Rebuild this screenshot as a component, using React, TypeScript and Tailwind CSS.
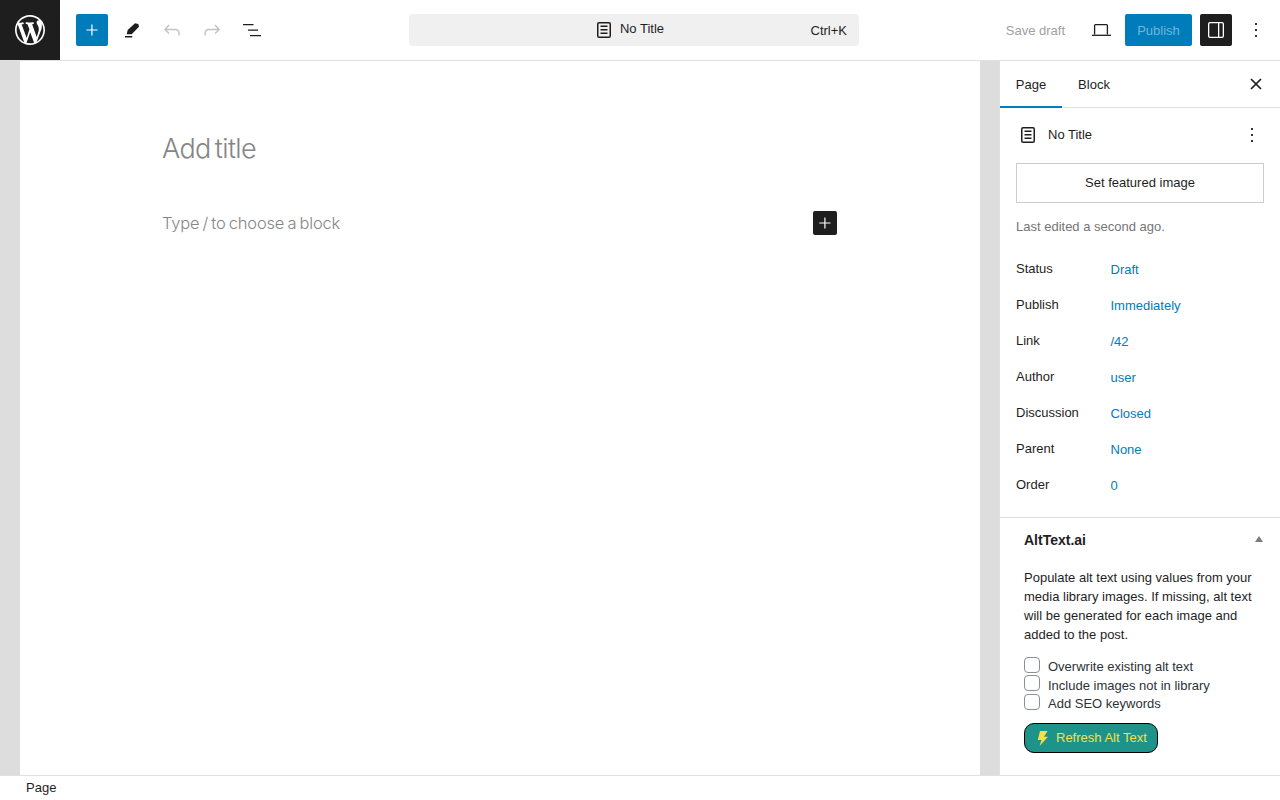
import React from "react";

const P = ({ d, size = 24, className = "" }: { d: string; size?: number; className?: string }) => (
  <svg viewBox="0 0 24 24" width={size} height={size} className={`fill-current shrink-0 ${className}`}>
    <path d={d} />
  </svg>
);

const icons = {
  plus: "M17.5 11.4h-5V6.4h-1.2v5H6.3v1.2h5v5h1.2v-5h5z",
  edit: "M15 5.3l3.3.7.7 2.7-7.3 7.6H6.7l1-4.3zM5 18h7.3v1.4H5z",
  undo: "M18.3 11.7c-.6-.6-1.4-.9-2.3-.9H6.7l2.9-3.3-1.1-1-4.5 5L8.5 16l1-1-2.7-2.7H16c.5 0 .9.2 1.3.5 1 1 1 3.4 1 4.5v.3h1.5v-.2c0-1.5 0-4.3-1.5-5.7z",
  redo: "M15.6 6.5l-1.1 1 2.9 3.3H8c-.9 0-1.7.3-2.3.9-1.4 1.5-1.4 4.2-1.4 5.6v.2h1.5v-.3c0-1.1 0-3.5 1-4.5.3-.3.7-.5 1.3-.5h9.2L14.5 15l1.1 1.1 4.6-4.6-4.6-5z",
  list: "M3 6h10.5v1.3H3zM8 11.4h10v1.3H8zM10 17h11v1.3H10z",
  page: "M15.5 7.5h-7V9h7V7.5Zm-7 3.5h7v1.5h-7V11Zm7 3.5h-7V16h7v-1.5ZM17 4H7a2 2 0 0 0-2 2v12a2 2 0 0 0 2 2h10a2 2 0 0 0 2-2V6a2 2 0 0 0-2-2ZM7 5.5h10a.5.5 0 0 1 .5.5v12a.5.5 0 0 1-.5.5H7a.5.5 0 0 1-.5-.5V6a.5.5 0 0 1 .5-.5Z",
  drawer: "M18 4H6c-1.1 0-2 .9-2 2v12c0 1.1.9 2 2 2h12c1.1 0 2-.9 2-2V6c0-1.1-.9-2-2-2zm-4 14.8H6c-.4 0-.7-.3-.7-.7V5.9c0-.4.3-.7.7-.7h8v13.6zm4.7-.7c0 .4-.3.7-.7.7h-2.7V5.2H18c.4 0 .7.3.7.7v12.2z",
  more: "M12.9 18.9h-1.8v-1.8h1.8zm0-6h-1.8v-1.8h1.8zm0-6h-1.8V5.1h1.8z",
};

const rows = [
  ["Status", "Draft"],
  ["Publish", "Immediately"],
  ["Link", "/42"],
  ["Author", "user"],
  ["Discussion", "Closed"],
  ["Parent", "None"],
  ["Order", "0"],
];

const checks = [
  ["Overwrite existing alt text", "h-[18px]", "mt-[2px]"],
  ["Include images not in library", "h-[19px]", "mt-[3px]"],
  ["Add SEO keywords", "h-[18px]", "mt-[2px]"],
];

export default function App() {
  return (
    <div className="w-[1280px] h-[800px] overflow-hidden flex flex-col bg-white text-[13px] text-[#1e1e1e] font-['Liberation_Sans',Arial,sans-serif]">
      <header className="h-[61px] shrink-0 border-b border-[#e0e0e0] grid grid-cols-[409px_450px_421px]">
        <div className="flex items-center">
          <div className="w-[60px] h-[60px] bg-[#1e1e1e] flex items-center justify-center text-white">
            <svg viewBox="-2 -2 24 24" width={36} height={36} className="fill-current">
              <path d="M20 10c0-5.51-4.49-10-10-10C4.48 0 0 4.49 0 10c0 5.52 4.48 10 10 10 5.51 0 10-4.48 10-10zM7.78 15.37L4.37 6.22c.55-.02 1.17-.08 1.17-.08.5-.06.44-1.13-.06-1.11 0 0-1.45.11-2.37.11-.18 0-.37 0-.58-.01C4.12 2.69 6.87 1.11 10 1.11c2.33 0 4.45.87 6.05 2.34-.68-.11-1.65.39-1.65 1.58 0 .74.45 1.36.9 2.1.35.61.55 1.36.55 2.46 0 1.49-1.4 5-1.4 5l-3.03-8.37c.54-.02.82-.17.82-.17.5-.05.44-1.25-.06-1.22 0 0-1.44.12-2.38.12-.87 0-2.33-.12-2.33-.12-.5-.03-.56 1.2-.06 1.22l.92.08 1.26 3.41zM17.41 10c.24-.64.74-1.87.43-4.25.7 1.29 1.05 2.71 1.05 4.25 0 3.29-1.73 6.24-4.4 7.78.97-2.59 1.94-5.2 2.92-7.78zM6.1 18.09C3.12 16.65 1.11 13.53 1.11 10c0-1.3.23-2.48.72-3.59C3.25 10.3 4.67 14.2 6.1 18.09zm4.03-6.63l2.58 6.98c-.86.29-1.76.45-2.71.45-.79 0-1.57-.11-2.29-.33.81-2.38 1.62-4.74 2.42-7.1z" />
            </svg>
          </div>
          <div className="flex items-center gap-2 pl-4">
            <div className="w-8 h-8 rounded-[2px] bg-[#007cba] text-white flex items-center justify-center"><P d={icons.plus} /></div>
            <div className="w-8 h-8 flex items-center justify-center"><P d={icons.edit} /></div>
            <div className="w-8 h-8 flex items-center justify-center text-[#c4c4c4]"><P d={icons.undo} /></div>
            <div className="w-8 h-8 flex items-center justify-center text-[#c4c4c4]"><P d={icons.redo} /></div>
            <div className="w-8 h-8 flex items-center justify-center"><P d={icons.list} /></div>
          </div>
        </div>
        <div className="self-center h-8 rounded-[4px] bg-[#f0f0f0] grid grid-cols-[1fr_auto_1fr] items-center pr-3">
          <span />
          <div className="flex items-center gap-1 pb-[1px]">
            <P d={icons.page} size={24} className="mt-[1px]" />
            <span className="mb-[2px]">No Title</span>
          </div>
          <span className="justify-self-end pt-[1px]">Ctrl+K</span>
        </div>
        <div className="flex items-center justify-end pr-3">
          <span className="text-[#a0a0a0] mr-[24px] pt-[1px]">Save draft</span>
          <svg viewBox="0 0 24 24" width={24} height={24} className="mr-3 shrink-0 fill-none stroke-current" strokeWidth={1.3}>
            <path d="M5.6 16.5V7.5c0-.5.4-.9.9-.9h11c.5 0 .9.4.9.9v9" />
            <path d="M3 17.3h19" />
          </svg>
          <div className="w-[67px] h-8 rounded-[2px] bg-[#007cba] text-[#72b6d9] flex items-center justify-center pt-[1px]">Publish</div>
          <div className="w-8 h-8 ml-2 rounded-[2px] bg-[#1e1e1e] text-white flex items-center justify-center"><P d={icons.drawer} /></div>
          <div className="w-6 h-8 ml-3 flex items-center justify-center"><P d={icons.more} /></div>
        </div>
      </header>

      <main className="flex-1 min-h-0 flex">
        <div className="flex-1 bg-[#dddddd] pl-5 pr-[19px] flex">
          <div className="flex-1 bg-white flex flex-col items-center font-['Inter',sans-serif]">
            <div className="w-[674px]">
              <div className="mt-[69px] h-[38px] flex items-center -ml-px text-[27px] font-light tracking-[-0.6px] [word-spacing:-3px] text-[#858585]">Add title</div>
              <div className="mt-[43px] h-[24px] flex items-center justify-between text-[#858585]">
                <span className="-ml-px text-[16.5px] font-light tracking-[-0.2px] [word-spacing:-1.2px]">Type / to choose a block</span>
                <div className="w-6 h-6 rounded-[2px] bg-[#1e1e1e] text-white flex items-center justify-center"><P d={icons.plus} /></div>
              </div>
            </div>
          </div>
        </div>
        <aside className="w-[281px] shrink-0 border-l border-[#e0e0e0] bg-white flex flex-col">
          <div className="h-[47px] shrink-0 border-b border-[#e0e0e0] flex items-stretch relative">
            <div className="w-[62px] flex items-center justify-center border-b-2 border-[#007cba] -mb-px pt-[3px]">Page</div>
            <div className="w-[64px] flex items-center justify-center pt-[2px]">Block</div>
            <div className="ml-auto mr-3 w-6 flex items-center justify-center">
              <svg viewBox="0 0 24 24" width={24} height={24} className="fill-none stroke-current" strokeWidth={1.7}>
                <path d="M7 7l10 10M17 7L7 17" />
              </svg>
            </div>
          </div>
          <div className="px-4 pt-[15px] border-b border-[#e0e0e0] h-[410px] shrink-0">
            <div className="h-6 flex items-center">
              <P d={icons.page} className="mr-2" />
              <span>No Title</span>
              <P d={icons.more} className="ml-auto" />
            </div>
            <div className="mt-[16px] h-10 border border-[#cccccc] flex items-center justify-center">Set featured image</div>
            <div className="mt-[16px] text-[#757575] leading-[16px]">Last edited a second ago.</div>
            <div className="mt-[17px]">
              {rows.map(([k, v]) => (
                <div key={k} className="h-9 flex items-center">
                  <span className="w-[94.5px] pb-[2px]">{k}</span>
                  <span className="text-[#007cba]">{v}</span>
                </div>
              ))}
            </div>
          </div>
          <div className="flex-1 min-h-0 pl-6 pr-4">
            <div className="h-[44px] flex items-center justify-between">
              <span className="text-[14px] font-bold">AltText.ai</span>
              <span className="w-0 h-0 border-x-[4px] border-x-transparent border-b-[6px] border-b-[#7c7c84] mb-[2px] mr-[1px]" />
            </div>
            <p className="mt-[6px] leading-[19px] pr-1">
              Populate alt text using values from your media library images. If missing, alt text will be generated for each image and added to the post.
            </p>
            <div className="mt-[13px] flex flex-col">
              {checks.map(([label, h, t]) => (
                <label key={label} className={`${h} flex items-start text-[#2c3338]`}>
                  <input type="checkbox" className="appearance-none w-4 h-4 rounded-[4px] border border-[#8c8f94] bg-white shrink-0 mr-2" />
                  <span className={`${t} leading-[15px]`}>{label}</span>
                </label>
              ))}
            </div>
            <button className="mt-[11px] h-[30px] w-[134px] rounded-[10px] border border-black bg-[#1d9389] text-[#f5e04a] flex items-center pl-3 gap-[7px]">
              <svg viewBox="0 0 12 17" width={12} height={17} className="fill-current shrink-0">
                <path d="M3 1h7.5L7 6.7h4L2.5 16l2-6H.8z" />
              </svg>
              <span>Refresh Alt Text</span>
            </button>
          </div>
        </aside>
      </main>

      <footer className="h-[25px] shrink-0 border-t border-[#e0e0e0] flex items-center pl-[26px] pb-[1px]">Page</footer>
    </div>
  );
}
